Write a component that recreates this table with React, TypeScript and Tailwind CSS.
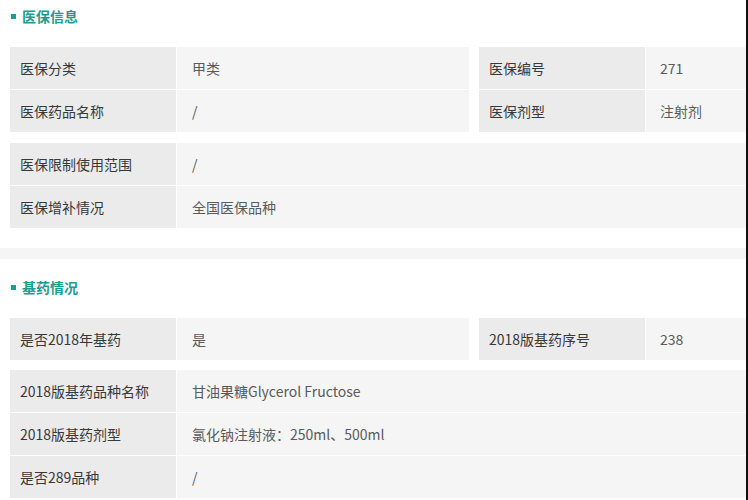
const font = { fontFamily: "'Noto Sans CJK SC', 'Noto Sans', sans-serif" };

type Pair = [string, string];

function SectionTitle({ text }: { text: string }) {
  return (
    <div className="flex items-center h-5 pl-[11px] gap-[6px]">
      <span className="w-[5px] h-[5px] bg-[#1c9d8e]" />
      <span className="text-[14px] font-bold text-[#1c9d8e] leading-5">{text}</span>
    </div>
  );
}

function Row({ label, value, pad = 'pl-[15px]' }: { label: string; value: string; pad?: string }) {
  return (
    <div className="flex h-[42px]">
      <div className="w-[166px] shrink-0 bg-[#ebebeb] flex items-center pl-[10px] text-[14px] text-[#383838]">
        {label}
      </div>
      <div className={`flex-1 ml-px bg-[#f5f5f6] flex items-center ${pad} text-[14px] text-[#5a5a5a]`}>
        {value}
      </div>
    </div>
  );
}

function Block({ rows, pad }: { rows: Pair[]; pad?: string }) {
  return (
    <div className="flex flex-col gap-px">
      {rows.map(([l, v]) => (
        <Row key={l} label={l} value={v} pad={pad} />
      ))}
    </div>
  );
}

function Split({ left, right }: { left: Pair[]; right: Pair[] }) {
  return (
    <div className="flex gap-[10px]">
      <div className="w-[459px]">
        <Block rows={left} />
      </div>
      <div className="flex-1">
        <Block rows={right} pad="pl-[14px]" />
      </div>
    </div>
  );
}

export default function App() {
  return (
    <div className="w-[748px] h-[500px] overflow-hidden flex bg-white" style={font}>
      <div className="w-[746px] flex flex-col">
        {/* ─── 医保信息 ─── */}
        <div className="pt-[6px] pb-[20px]">
          <SectionTitle text="医保信息" />
          <div className="pl-[10px] mt-[21px] flex flex-col gap-[11px]">
            <Split
              left={[
                ['医保分类', '甲类'],
                ['医保药品名称', '/'],
              ]}
              right={[
                ['医保编号', '271'],
                ['医保剂型', '注射剂'],
              ]}
            />
            <Block
              rows={[
                ['医保限制使用范围', '/'],
                ['医保增补情况', '全国医保品种'],
              ]}
            />
          </div>
        </div>

        <div className="h-[11px] bg-[#f5f5f5]" />

        {/* ─── 基药情况 ─── */}
        <div className="pt-[18px]">
          <SectionTitle text="基药情况" />
          <div className="pl-[10px] mt-[21px] flex flex-col gap-[10px]">
            <Split left={[['是否2018年基药', '是']]} right={[['2018版基药序号', '238']]} />
            <Block
              rows={[
                ['2018版基药品种名称', '甘油果糖Glycerol Fructose'],
                ['2018版基药剂型', '氯化钠注射液：250ml、500ml'],
                ['是否289品种', '/'],
              ]}
            />
          </div>
        </div>
      </div>
      <div className="w-[2px] bg-[#111]" />
    </div>
  );
}
